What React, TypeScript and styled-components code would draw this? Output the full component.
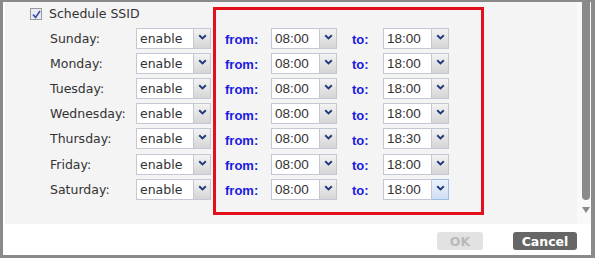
import React from 'react';
import styled, { createGlobalStyle } from 'styled-components';

type DayRow = { day: string; from: string; to: string };

const rows: DayRow[] = [
  { day: 'Sunday:', from: '08:00', to: '18:00' },
  { day: 'Monday:', from: '08:00', to: '18:00' },
  { day: 'Tuesday:', from: '08:00', to: '18:00' },
  { day: 'Wednesday:', from: '08:00', to: '18:00' },
  { day: 'Thursday:', from: '08:00', to: '18:30' },
  { day: 'Friday:', from: '08:00', to: '18:00' },
  { day: 'Saturday:', from: '08:00', to: '18:00' },
];

const GlobalStyle = createGlobalStyle`
  html, body {
    margin: 0;
    padding: 0;
    background: #ffffff;
  }
  body {
    font-family: 'DejaVu Sans', 'Liberation Sans', sans-serif;
  }
`;

const Chevron = () => (
  <svg width='9' height='6' viewBox='0 0 9 6'>
    <path d='M1.2 1.2 L4.5 4.4 L7.8 1.2' fill='none' stroke='#22397a' strokeWidth='1.9' />
  </svg>
);

type SelectProps = {
  value: string;
  fieldWidth: number;
  time?: boolean;
  hover?: boolean;
};

const Select = ({ value, fieldWidth, time, hover }: SelectProps) => (
  <SelectBox>
    <Field $width={fieldWidth} $time={time}>
      {value}
    </Field>
    <ArrowBtn $hover={hover}>
      <Chevron />
    </ArrowBtn>
  </SelectBox>
);

export default function App() {
  return (
    <>
      <GlobalStyle />
      <Frame>
        <Body>
          <Content>
            <LeftCol>
              <Header>
                <CheckBox>
                  <svg width='9' height='9' viewBox='0 0 9 9'>
                    <path d='M1 4.6 L3.6 7.4 L8 1' fill='none' stroke='#3b4fb0' strokeWidth='1.6' />
                  </svg>
                </CheckBox>
                <HeaderText>Schedule SSID</HeaderText>
              </Header>
              {rows.map(r => (
                <Row key={r.day}>
                  <DayLabel>{r.day}</DayLabel>
                  <Select value='enable' fieldWidth={58} />
                </Row>
              ))}
            </LeftCol>
            <RedBox>
              {rows.map((r, i) => (
                <Row key={r.day}>
                  <BlueLabel $width={46}>from:</BlueLabel>
                  <Select value={r.from} fieldWidth={49} time />
                  <BlueLabel $width={31} $gap={15}>
                    to:
                  </BlueLabel>
                  <Select value={r.to} fieldWidth={49} time hover={i === rows.length - 1} />
                </Row>
              ))}
            </RedBox>
          </Content>
          <ScrollBar>
            <Thumb />
            <DownArrow />
          </ScrollBar>
        </Body>
        <Footer>
          <Button $disabled>OK</Button>
          <Button>Cancel</Button>
        </Footer>
      </Frame>
    </>
  );
}

const Frame = styled.div`
  width: 595px;
  height: 258px;
  box-sizing: border-box;
  border-top: 2px solid #8a8a8a;
  border-left: 3px solid #8a8a8a;
  border-right: 4px solid #8a8a8a;
  border-bottom: 3px solid #8a8a8a;
  background: #ffffff;
  display: flex;
  flex-direction: column;
  overflow: hidden;
`;

const Body = styled.div`
  height: 222px;
  display: flex;
  padding-left: 2px;
`;

const Content = styled.div`
  flex: 1;
  background: #f4f4f4;
  display: flex;
  align-items: flex-start;
  padding-top: 5px;
`;

const LeftCol = styled.div`
  padding-left: 25px;
  width: 181px;
`;

const Header = styled.div`
  display: flex;
  align-items: center;
  height: 14px;
  margin-bottom: 4.5px;
`;

const CheckBox = styled.div`
  width: 10px;
  height: 10px;
  border: 1px solid #9a9a9a;
  background: #e9ecf4;
  display: flex;
  align-items: center;
  justify-content: center;
`;

const HeaderText = styled.span`
  margin-left: 7px;
  font-size: 12.5px;
  line-height: 14px;
  color: #333333;
`;

const Row = styled.div`
  display: flex;
  align-items: center;
  height: 25.2px;
`;

const DayLabel = styled.span`
  width: 86px;
  margin-left: 20px;
  font-size: 12.5px;
  color: #333333;
`;

const SelectBox = styled.div`
  display: flex;
  height: 21px;
`;

const Field = styled.div<{ $width: number; $time?: boolean }>`
  width: ${p => p.$width}px;
  box-sizing: border-box;
  border: 1px solid #c3c8d4;
  background: #ffffff;
  padding-left: ${p => (p.$time ? 3 : 3)}px;
  display: flex;
  align-items: center;
  font-family: ${p => (p.$time ? "'Liberation Sans', sans-serif" : "'DejaVu Sans', sans-serif")};
  font-size: ${p => (p.$time ? 13.5 : 12.5)}px;
  color: #333333;
`;

const ArrowBtn = styled.div<{ $hover?: boolean }>`
  width: 17px;
  box-sizing: border-box;
  border: 1px solid ${p => (p.$hover ? '#9fbde3' : '#c3c8d4')};
  border-left: none;
  background: ${p =>
    p.$hover
      ? 'linear-gradient(#eaf2fb, #cfe0f4)'
      : 'linear-gradient(#f3f3f3, #d5d5d5)'};
  display: flex;
  align-items: center;
  justify-content: center;
  padding-bottom: 3px;
`;

const RedBox = styled.div`
  width: 271px;
  height: 208px;
  box-sizing: border-box;
  margin-left: 2px;
  border: 3px solid #e3101c;
  padding: 15.5px 0 0 9px;
`;

const BlueLabel = styled.span<{ $width: number; $gap?: number }>`
  width: ${p => p.$width}px;
  margin-left: ${p => p.$gap ?? 0}px;
  padding-top: 3px;
  font-family: 'Liberation Sans', sans-serif;
  font-weight: bold;
  font-size: 13px;
  color: #1a1ae0;
`;

const ScrollBar = styled.div`
  width: 13px;
  background: #f9f9f9;
  display: flex;
  flex-direction: column;
  align-items: flex-end;
  padding-right: 1px;
`;

const Thumb = styled.div`
  width: 8px;
  height: 198px;
  background: #8a8a8a;
  border-radius: 0 0 4px 4px;
`;

const DownArrow = styled.div`
  margin-top: 7px;
  margin-right: 0px;
  width: 0;
  height: 0;
  border-left: 4.5px solid transparent;
  border-right: 4.5px solid transparent;
  border-top: 6px solid #8a8a8a;
`;

const Footer = styled.div`
  flex: 1;
  display: flex;
  justify-content: flex-end;
  align-items: center;
  gap: 30px;
  padding: 3px 14px 0 0;
`;

const Button = styled.div<{ $disabled?: boolean }>`
  height: 18px;
  width: ${p => (p.$disabled ? 46 : 64)}px;
  border-radius: 3px;
  background: ${p => (p.$disabled ? '#e2e2e2' : '#666666')};
  color: ${p => (p.$disabled ? '#b9b9b9' : '#ffffff')};
  font-family: 'DejaVu Sans', sans-serif;
  font-weight: bold;
  font-size: 12.5px;
  display: flex;
  align-items: center;
  justify-content: center;
`;
